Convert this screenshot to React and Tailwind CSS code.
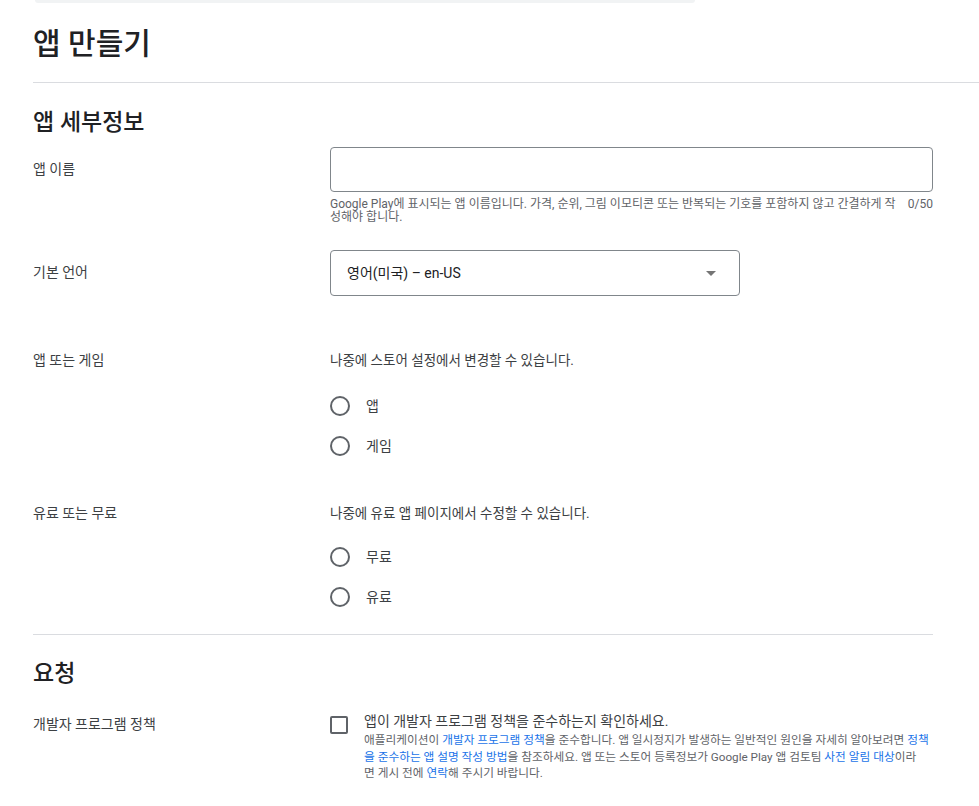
import React from "react";

const font = { fontFamily: "Roboto, 'Noto Sans CJK KR', sans-serif" };

function Radio({ label }) {
  return (
    <div className="flex items-center h-[20px]">
      <span className="w-[20px] h-[20px] rounded-full border-2 border-[#5f6368] shrink-0" />
      <span className="ml-[16px] text-[14px] leading-[20px] text-[#3c4043]">{label}</span>
    </div>
  );
}

function Link({ children }) {
  return <span className="text-[#1a73e8]">{children}</span>;
}

export default function App() {
  return (
    <div className="bg-white min-h-[806px] w-[979px] overflow-hidden [font-feature-settings:'palt']" style={font}>
      <div className="ml-[35px] w-[660px] h-[3px] bg-[#f1f3f4] rounded-b-[6px]" />
      <div className="ml-[33px] border-b border-[#dadce0] pt-[23px] pb-[20px]">
        <h1 className="text-[30px] leading-[36px] font-medium text-[#202124]">앱 만들기</h1>
      </div>

      <div className="ml-[33px] w-[900px]">
        <h2 className="mt-[26px] text-[23px] leading-[28px] font-medium text-[#202124]">앱 세부정보</h2>

        {/* 앱 이름 */}
        <div className="mt-[10px] flex">
          <div className="w-[297px] shrink-0 pt-[12px] text-[14px] leading-[20px] text-[#3c4043]">앱 이름</div>
          <div className="w-[603px]">
            <div className="h-[45px] rounded-[4px] border border-[#80868b]" />
            <div className="mt-[6px] flex justify-between gap-[8px] text-[12px] leading-[13px] text-[#5f6368]">
              <div>
                <div className="whitespace-nowrap">Google Play에 표시되는 앱 이름입니다. 가격, 순위, 그림 이모티콘 또는 반복되는 기호를 포함하지 않고 간결하게 작</div>
                <div className="whitespace-nowrap">성해야 합니다.</div>
              </div>
              <div className="whitespace-nowrap">0/50</div>
            </div>
          </div>
        </div>

        {/* 기본 언어 */}
        <div className="mt-[26px] flex">
          <div className="w-[297px] shrink-0 pt-[12px] text-[14px] leading-[20px] text-[#3c4043]">기본 언어</div>
          <div className="w-[410px] h-[46px] rounded-[4px] border border-[#80868b] flex items-center justify-between pl-[16px] pr-[23px]">
            <span className="text-[14px] text-[#202124]">영어(미국) – en-US</span>
            <svg width="10" height="5" viewBox="0 0 10 5"><path d="M0 0 L10 0 L5 5 Z" fill="#757575" /></svg>
          </div>
        </div>

        {/* 앱 또는 게임 */}
        <div className="mt-[54px] flex">
          <div className="w-[297px] shrink-0 text-[14px] leading-[20px] text-[#3c4043]">앱 또는 게임</div>
          <div>
            <div className="text-[13.5px] leading-[20px] text-[#3c4043]">나중에 스토어 설정에서 변경할 수 있습니다.</div>
            <div className="mt-[26px] flex flex-col gap-[20px]">
              <Radio label="앱" />
              <Radio label="게임" />
            </div>
          </div>
        </div>

        {/* 유료 또는 무료 */}
        <div className="mt-[47px] flex">
          <div className="w-[297px] shrink-0 text-[14px] leading-[20px] text-[#3c4043]">유료 또는 무료</div>
          <div>
            <div className="text-[13.5px] leading-[20px] text-[#3c4043]">나중에 유료 앱 페이지에서 수정할 수 있습니다.</div>
            <div className="mt-[24px] flex flex-col gap-[20px]">
              <Radio label="무료" />
              <Radio label="유료" />
            </div>
          </div>
        </div>

        <div className="mt-[27px] border-t border-[#dadce0]" />

        <h2 className="mt-[25px] text-[23px] leading-[28px] font-medium text-[#202124]">요청</h2>

        {/* 개발자 프로그램 정책 */}
        <div className="mt-[23px] flex">
          <div className="w-[297px] shrink-0 pt-[3px] text-[14px] leading-[20px] text-[#3c4043]">개발자 프로그램 정책</div>
          <div className="flex">
            <span className="mt-[5px] w-[18px] h-[18px] rounded-[2px] border-2 border-[#5f6368] shrink-0" />
            <div className="ml-[16px]">
              <div className="text-[14px] leading-[20px] text-[#3c4043] whitespace-nowrap">앱이 개발자 프로그램 정책을 준수하는지 확인하세요.</div>
              <div className="mt-[1px] text-[11.7px] leading-[16.5px] text-[#5f6368]">
                <div className="whitespace-nowrap">애플리케이션이 <Link>개발자 프로그램 정책</Link>을 준수합니다. 앱 일시정지가 발생하는 일반적인 원인을 자세히 알아보려면 <Link>정책</Link></div>
                <div className="whitespace-nowrap"><Link>을 준수하는 앱 설명 작성 방법</Link>을 참조하세요. 앱 또는 스토어 등록정보가 Google Play 앱 검토팀 <Link>사전 알림 대상</Link>이라</div>
                <div className="whitespace-nowrap">면 게시 전에 <Link>연락</Link>해 주시기 바랍니다.</div>
              </div>
            </div>
          </div>
        </div>
      </div>
    </div>
  );
}
